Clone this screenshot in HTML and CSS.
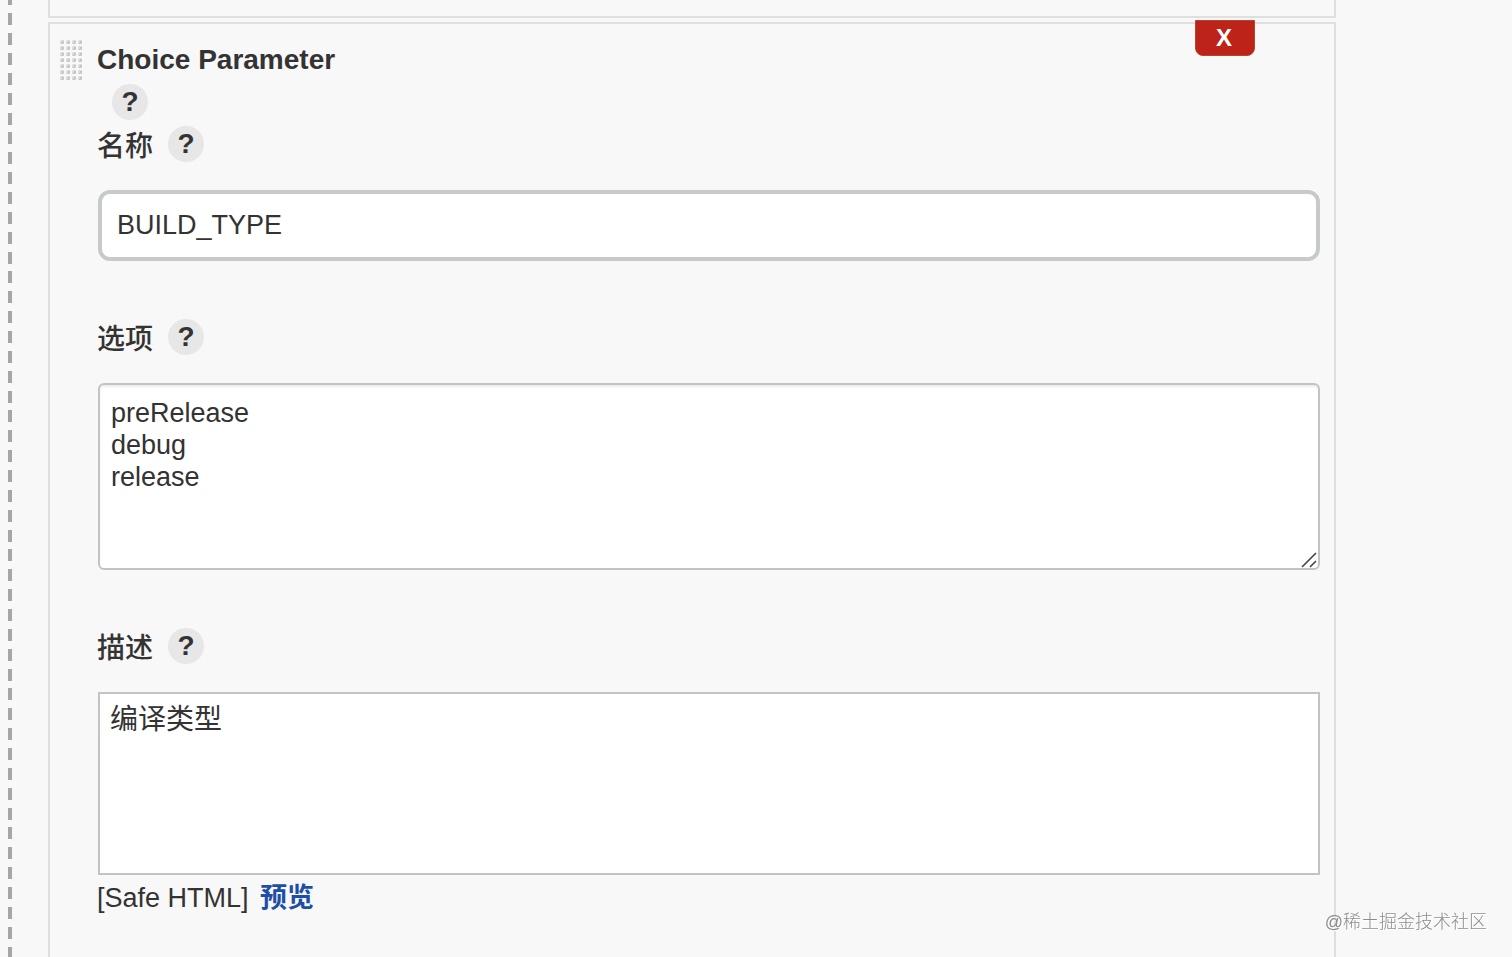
FILE: index.html
```
<!DOCTYPE html>
<html lang="zh-CN">
<head>
    <meta charset="UTF-8">
    <meta name="viewport" content="width=device-width, initial-scale=1.0">
    <title>Choice Parameter</title>
    <link rel="stylesheet" href="styles.css">
</head>
<body>
    <main class="page">
        <div class="dashed-line"></div>
        <form class="param-list">
            <div class="param previous"></div>

            <section class="param">
                <button type="button" class="delete-btn">X</button>
                <svg class="drag-handle" width="23" height="41" aria-hidden="true">
                    <defs>
                        <pattern id="dots" width="6" height="6" patternUnits="userSpaceOnUse">
                            <path d="M1 0H4V3L3 4H0V1Z" fill="#dcdcda"/>
                            <path d="M2 1H4V3L3 4H1V3H2Z" fill="#c6c6c4"/>
                        </pattern>
                    </defs>
                    <rect width="23" height="41" fill="url(#dots)"/>
                </svg>

                <div class="param-body">
                    <h2 class="title">Choice Parameter</h2>
                    <div class="row">
                        <button type="button" class="help title-help">?</button>
                    </div>

                    <div class="field">
                        <div class="row">
                            <label for="name">名称</label>
                            <button type="button" class="help">?</button>
                        </div>
                        <input type="text" id="name" class="text-input" value="BUILD_TYPE">
                    </div>

                    <div class="field">
                        <div class="row">
                            <label for="choices">选项</label>
                            <button type="button" class="help">?</button>
                        </div>
                        <div class="choices-wrap">
                            <textarea id="choices" class="text-area choices" rows="5">preRelease
debug
release</textarea>
                            <svg class="resizer" width="16" height="16" viewBox="0 0 16 16" aria-hidden="true">
                                <path d="M1 15L15 1M9 15L15 9" stroke="#444" stroke-width="1.6" fill="none"/>
                            </svg>
                        </div>
                    </div>

                    <div class="field">
                        <div class="row">
                            <label for="description">描述</label>
                            <button type="button" class="help">?</button>
                        </div>
                        <textarea id="description" class="text-area description" rows="5">编译类型</textarea>
                        <div class="format">[Safe HTML] <a href="#preview">预览</a></div>
                    </div>
                </div>
            </section>
        </form>
    </main>
    <div class="watermark">@稀土掘金技术社区</div>
</body>
</html>
```
FILE: styles.css
```
* {
    box-sizing: border-box;
}

body {
    margin: 0;
    background-color: #f8f8f8;
    color: #333;
    font-family: "Liberation Sans", "Noto Sans CJK SC", sans-serif;
    font-size: 28px;
    line-height: 42px;
}

.page {
    display: flex;
    min-height: 100vh;
    padding: 0 176px 0 8px;
}

/* 12px dashes, seven of them in every 139px */
.dashed-line {
    width: 4px;
    margin-right: 36px;
    background: repeating-linear-gradient(
        #a6a6a6 0 5px, transparent 5px 13px,
        #a6a6a6 13px 25px, transparent 25px 33px,
        #a6a6a6 33px 45px, transparent 45px 53px,
        #a6a6a6 53px 65px, transparent 65px 73px,
        #a6a6a6 73px 85px, transparent 85px 93px,
        #a6a6a6 93px 105px, transparent 105px 113px,
        #a6a6a6 113px 125px, transparent 125px 132px,
        #a6a6a6 132px 139px
    );
}

.param-list {
    flex: 1;
    display: flex;
    flex-direction: column;
    gap: 4px;
}

.param {
    position: relative;
    flex: 1;
    display: flex;
    align-items: flex-start;
    gap: 14px;
    padding: 15px 14px 15px 10px;
    border: 2px solid #dedfdf;
    border-bottom: none;
}

.previous {
    flex: none;
    padding: 16px 0 0;
    border-top: none;
    border-bottom: 2px solid #dedfdf;
}

.delete-btn {
    position: absolute;
    top: -4px;
    right: 79px;
    width: 60px;
    height: 36px;
    padding: 0 2px 0 0;
    border: 1px solid #b5452f;
    border-radius: 0 0 8px 8px;
    background-color: #bd2318;
    color: #fff;
    font: bold 24px/34px "Liberation Sans", sans-serif;
    cursor: pointer;
}

.drag-handle {
    flex: none;
    margin-top: 1px;
}

.param-body {
    flex: 1;
}

.title {
    margin: 0;
    font-size: 28px;
}

.row {
    display: flex;
    align-items: center;
    gap: 15px;
    height: 42px;
    margin-bottom: 25px;
}

.title + .row {
    margin-bottom: 0;
}

label {
    padding-top: 6px;
    font-weight: 500;
}

.help {
    width: 36px;
    height: 36px;
    padding: 0;
    border: none;
    border-radius: 50%;
    background-color: #e7e7e7;
    color: #333;
    font: bold 28px/36px "Liberation Sans", sans-serif;
    cursor: pointer;
}

.title-help {
    margin-left: 15px;
}

.field {
    margin-bottom: 55px;
}

.text-input,
.text-area {
    display: block;
    width: calc(100% - 1px);
    margin: 0 0 0 1px;
    background-color: #fff;
    color: #333;
    font: inherit;
    font-size: 27px;
    outline: none;
}

.text-input {
    height: 71px;
    padding: 0 15px;
    border: 4px solid #c7caca;
    border-radius: 12px;
}

.text-area {
    padding: 12px 11px 11px;
    border: 2px solid #c3c3c3;
    line-height: 32px;
    resize: none;
}

.choices-wrap {
    position: relative;
}

.choices {
    border-radius: 6px;
    box-shadow: inset 0 2px 2px #eee;
}

.description {
    padding: 10px 10px 9px;
    font-size: 28px;
}

.resizer {
    position: absolute;
    right: 3px;
    bottom: 2px;
}

.format {
    margin-top: 2px;
    font-size: 27px;
}

.format a {
    margin-left: 4px;
    color: #1d4fa8;
    font-weight: 700;
    text-decoration: none;
}

.watermark {
    position: fixed;
    right: 25px;
    bottom: 21px;
    color: #8c8c8c;
    font-size: 18px;
    font-weight: 300;
    line-height: 28px;
    text-shadow: 1px 1px 0 #fff;
}
```
